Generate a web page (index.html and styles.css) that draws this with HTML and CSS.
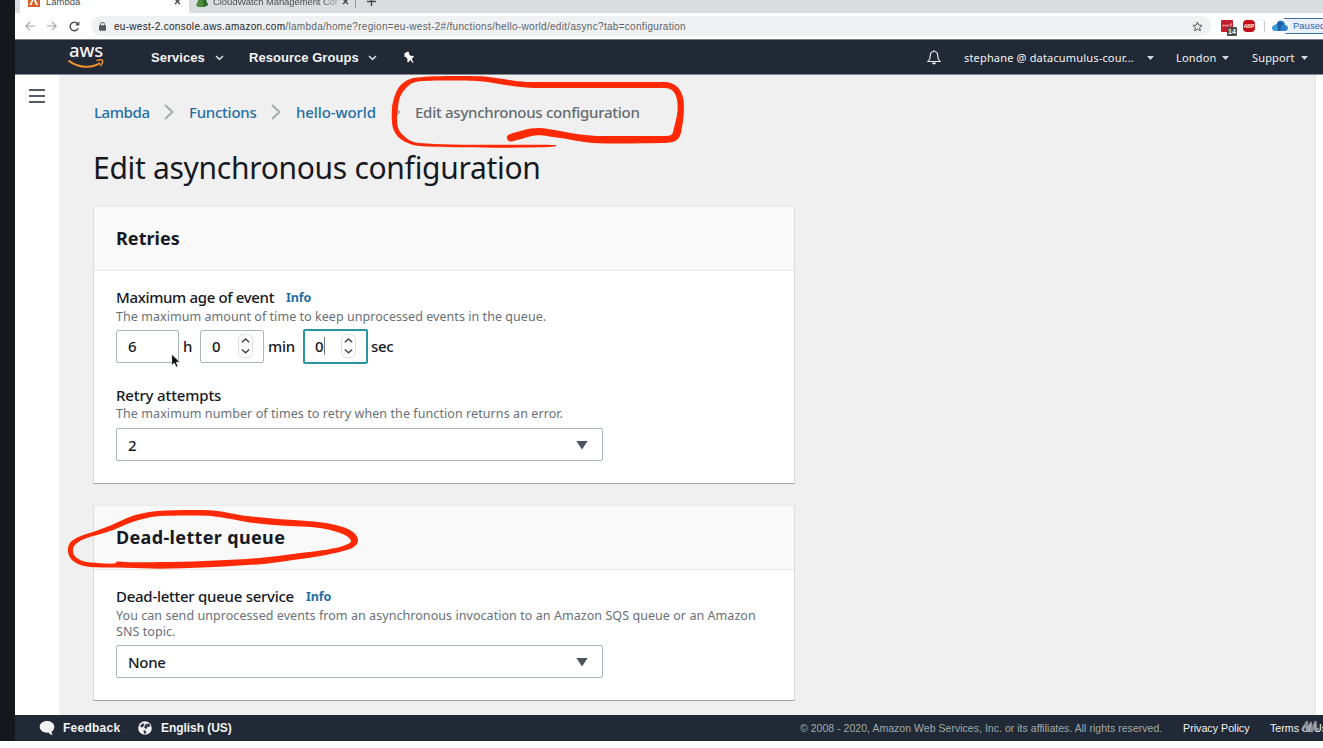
FILE: index.html
```html
<!DOCTYPE html>
<html lang="en">
<head>
<meta charset="utf-8">
<title>Lambda</title>
<link rel="stylesheet" href="styles.css">
</head>
<body>
<div class="frame">
  <div class="edge"></div>
  <div class="browser">
    <div class="tabs">
      <div class="tab tab-active">
        <svg class="favicon" width="12" height="12" viewBox="0 0 12 12"><rect width="12" height="12" fill="#d8632a"/><path d="M3 1h3l4 9H8L5.500 4.500 3.500 10H1.500L4.500 3.500 4 2.500H3z" fill="#fff"/></svg>
        <span class="tab-title tab-title-a">Lambda</span>
        <svg class="tab-x" width="7" height="7" viewBox="0 0 7 7"><path d="M1 1l5 5M6 1L1 6" stroke="#444" stroke-width="1.300"/></svg>
      </div>
      <div class="tab tab-second">
        <svg class="favicon" width="12" height="12" viewBox="0 0 12 12"><path d="M3 0h6l1 5 2 5-4 2H2l-2-2 2-4z" fill="#4b8b3b"/><path d="M6 0h3l1 5 2 5-4 2z" fill="#2f682a"/></svg>
        <span class="tab-title tab-title-b">CloudWatch Management Con:</span>
        <svg class="tab-x" width="7" height="7" viewBox="0 0 7 7"><path d="M1 1l5 5M6 1L1 6" stroke="#444" stroke-width="1.300"/></svg>
      </div>
      <div class="tab-divider"></div>
      <svg class="tab-plus" width="9" height="9" viewBox="0 0 9 9"><path d="M4.500 0v9M0 4.500h9" stroke="#444" stroke-width="1.400"/></svg>
    </div>

    <div class="toolbar">
      <svg class="nav-icon" width="10" height="10" viewBox="0 0 10 10"><path d="M10 5H1M5 .8L.8 5 5 9.200" fill="none" stroke="#a4a6a9" stroke-width="1.200"/></svg>
      <svg class="nav-icon nav-fwd" width="10" height="10" viewBox="0 0 10 10"><path d="M0 5h9M5 .8L9.200 5 5 9.200" fill="none" stroke="#a4a6a9" stroke-width="1.200"/></svg>
      <svg class="nav-icon nav-reload" width="11" height="11" viewBox="0 0 11 11"><path d="M9.300 7.200A4.300 4.300 0 1 1 8.600 2.600" fill="none" stroke="#4c4f53" stroke-width="1.500"/><path d="M10.300 .3v4.200H6.100z" fill="#4c4f53"/></svg>
      <div class="url">
        <svg width="7" height="9" viewBox="0 0 7 9"><rect y="3.300" width="7" height="5.400" rx=".7" fill="#55585c"/><path d="M1.600 4V2.200a1.900 1.900 0 0 1 3.800 0V4" fill="none" stroke="#55585c" stroke-width="1"/></svg>
        <span class="url-text"><b>eu-west-2.console.aws.amazon.com</b>/lambda/home?region=eu-west-2#/functions/hello-world/edit/async?tab=configuration</span>
        <svg class="star" width="11" height="11" viewBox="0 0 11 11"><path d="M5.500 1l1.300 3.100 3.300.3-2.500 2.200.8 3.200-2.900-1.700-2.900 1.700.8-3.200L.9 4.400l3.300-.3z" fill="none" stroke="#55585c" stroke-width="1"/></svg>
      </div>
      <div class="ext ext-red">
        <svg width="12" height="12" viewBox="0 0 12 12"><rect width="12" height="12" rx="1" fill="#c41e2b"/><path d="M1.500 5.500h7M10 3.500v3" stroke="#f1bcc0" stroke-width="1.400" stroke-dasharray="1.600 .5"/></svg>
        <span class="ext-count">14</span>
      </div>
      <div class="ext-abp">ABP</div>
      <div class="toolbar-divider"></div>
      <div class="profile">
        <svg width="19" height="19" viewBox="0 0 19 19"><circle cx="9" cy="9.500" r="9" fill="#fff"/><path d="M4 14a3 3 0 0 1 0-6 2 2 0 0 1 2-1 4 4 0 0 1 8 1 3 3 0 0 1 0 6z" fill="#3c9ddd"/><path d="M6 6a4 4 0 0 1 7 1l-3 7H7z" fill="#1d5fa4"/><path d="M10 9c2-3 7 0 6 3-1 2-2 2-3 2H9z" fill="#2e7fc4"/></svg>
        <span>Paused</span>
      </div>
    </div>

    <nav class="awsnav">
      <div class="logo">
        <span>aws</span>
        <svg width="36" height="9" viewBox="0 0 36 9"><path d="M.5 1.500C10 9 24 9.500 32 4.200" fill="none" stroke="#f0922b" stroke-width="2"/><path d="M28.500 1.600c2.600-.9 5.500-.9 6 0s-.4 3.700-2.300 5.700" fill="none" stroke="#f0922b" stroke-width="1.500"/></svg>
      </div>
      <span class="nav-bold services">Services</span>
      <svg class="chev" width="9" height="6" viewBox="0 0 9 6"><path d="M1 1l3.500 3.400L8 1" fill="none" stroke="#d5d8dc" stroke-width="1.600"/></svg>
      <span class="nav-bold groups">Resource Groups</span>
      <svg class="chev" width="9" height="6" viewBox="0 0 9 6"><path d="M1 1l3.500 3.400L8 1" fill="none" stroke="#d5d8dc" stroke-width="1.600"/></svg>
      <svg class="pin" width="12" height="13" viewBox="0 0 12 13"><path d="M1.500 2.300L5 .6l1.200 1-.5 1.100 2.200 2.400 1.900-.4 1.200 1.100-2.200 2 1.700 3.900-.8.400-2.200-3-2.400 2.400-1-1.200.6-1.800-1.900-2.700-1.300.1z" fill="#fff"/></svg>
      <div class="nav-right">
        <svg class="bell" width="14" height="15" viewBox="0 0 14 15"><path d="M7 1.500c-2.600 0-3.700 1.800-3.700 4 0 3-.8 4.500-2.300 6h12c-1.500-1.500-2.300-3-2.300-6 0-2.200-1.100-4-3.700-4zM7 .3v1.200" fill="none" stroke="#e6e8ea" stroke-width="1.200"/><path d="M5 12.500a2 2 0 0 0 4 0z" fill="#e6e8ea"/></svg>
        <span class="nav-text account">stephane @ datacumulus-cour...</span>
        <i class="caret"></i>
        <span class="nav-text region">London</span>
        <i class="caret"></i>
        <span class="nav-text support">Support</span>
        <i class="caret"></i>
      </div>
    </nav>

    <div class="page">
      <aside class="side"><div class="burger"></div></aside>
      <main class="main">
        <div class="crumbs">
          <a class="c1">Lambda</a>
          <svg class="sep" width="10" height="16" viewBox="0 0 10 16"><path d="M1 1l7.500 7L1 15" fill="none" stroke="#a3adae" stroke-width="2"/></svg>
          <a class="c2">Functions</a>
          <svg class="sep" width="10" height="16" viewBox="0 0 10 16"><path d="M1 1l7.500 7L1 15" fill="none" stroke="#a3adae" stroke-width="2"/></svg>
          <a class="c3">hello-world</a>
          <svg class="sep" width="10" height="16" viewBox="0 0 10 16"><path d="M1 1l7.500 7L1 15" fill="none" stroke="#a3adae" stroke-width="2"/></svg>
          <span class="c4">Edit asynchronous configuration</span>
        </div>
        <h1><span>Edit asynchronous configuration</span></h1>

        <section class="card card-retries">
          <h2><span class="h-retries">Retries</span></h2>
          <div class="card-body">
            <div class="label"><span class="l-age">Maximum age of event</span><a class="info">Info</a></div>
            <div class="hint"><span class="d-age">The maximum amount of time to keep unprocessed events in the queue.</span></div>
            <div class="times">
              <div class="num">6</div><span class="unit unit-h">h</span>
              <div class="num num-min">0<svg class="spin" width="15" height="24" viewBox="0 0 15 24"><rect x=".5" y=".5" width="14" height="23" rx="5" fill="none" stroke="#dedede"/><path d="M3.800 8.300L7.500 5l3.700 3.300M3.800 15.500l3.700 3.300 3.700-3.300" fill="none" stroke="#444" stroke-width="1.500"/></svg></div><span class="unit unit-min">min</span>
              <div class="num num-focus">0<i class="text-caret"></i><svg class="spin" width="15" height="24" viewBox="0 0 15 24"><rect x=".5" y=".5" width="14" height="23" rx="5" fill="none" stroke="#dedede"/><path d="M3.800 8.300L7.500 5l3.700 3.300M3.800 15.500l3.700 3.300 3.700-3.300" fill="none" stroke="#444" stroke-width="1.500"/></svg></div><span class="unit unit-sec">sec</span>
            </div>
            <div class="label label-retry"><span class="l-retry">Retry attempts</span></div>
            <div class="hint"><span class="d-retry">The maximum number of times to retry when the function returns an error.</span></div>
            <div class="select"><span>2</span><i class="arrow"></i></div>
          </div>
        </section>

        <section class="card card-dlq">
          <h2><span class="h-dlq">Dead-letter queue</span></h2>
          <div class="card-body">
            <div class="label"><span class="l-dlq">Dead-letter queue service</span><a class="info">Info</a></div>
            <div class="hint"><span class="d-dlq">You can send unprocessed events from an asynchronous invocation to an Amazon SQS queue or an Amazon<br>SNS topic.</span></div>
            <div class="select"><span>None</span><i class="arrow"></i></div>
          </div>
        </section>
      </main>
    </div>

    <footer class="footer">
      <svg width="16" height="16" viewBox="0 0 16 16"><path d="M8 1c4.200 0 7.300 2.500 7.300 5.800 0 2.200-1 3.900-2.700 5 .1 1.400.5 2.300 1.200 3.200-2 0-3.400-.9-4.300-2.400C4.500 13.100.7 10.500.7 6.800.7 3.500 3.800 1 8 1z" fill="#f3f3f3"/></svg>
      <span class="f-bold feedback">Feedback</span>
      <svg class="globe" width="14" height="14" viewBox="0 0 14 14"><circle cx="7" cy="7" r="6.800" fill="#f3f3f3"/><path d="M2 4.500l3-2.500 1.500 2L5 6l-2 .5zM7.500 3l4-.5 1 3-3 .5-1 2L6 7z M5.500 9l2 .5 1 2.500-2.500 1z" fill="#3a414e"/></svg>
      <span class="f-bold english">English (US)</span>
      <div class="footer-right">
        <span class="copy">© 2008 - 2020, Amazon Web Services, Inc. or its affiliates. All rights reserved.</span>
        <span class="privacy">Privacy Policy</span>
        <span class="terms">Terms of Use</span>
      </div>
    </footer>
  </div>

  <svg class="ink" width="1323" height="748" viewBox="0 0 1323 748">
    <path d="M556 146C554 147.800 500 148 463 147.200C440 147 425 147 413 145C400 141 393 134 392 123C391.500 114 391.500 107 393.500 100C396 91 399 86 403 83C408 79 412 78 417 77.500C430 75.800 465 75.700 480 76.300C500 77.500 512 81.500 527 82H664C676 82 682 90 683.500 100C684.500 110 683.500 120 682 127C681 134 680 138 676 140.500C673 142.500 667 143 660 143C640 143.500 610 143.800 593 143C580 142 571 139.500 560 138C551 137 545 135.300 538 135.300C530 135.500 521 139.500 512 141.500C507 142.500 505 136.500 509 134.500C518 131.500 528 128 538 128C546 128 553 130 560 131C572 133.500 585 135.500 597 136H664C670 136 672 135.500 673 132C675 123 677.500 117 677.700 107C677.500 95 674 88 664 88H533C513 87.500 497 82.500 480 81.200C466 80.300 432 80 420 81.200C413 82 410 84 407 87C401 93 399 98 398.300 105C397.500 112 396.500 117 397.200 123C398 130 400 132 403 135C408 140 412 142.500 420 143C433 144 449 144.500 463 144.700C500 145 540 144.300 556 145z"/>
    <path fill-rule="evenodd" d="M117 567.500C107 567.500 98 567.500 90 567C82 566 77 564 73 561C69 557 68 554 68 550C68 545 70 542 73 540C79 536 86 534 93 532C105 528 116 523 127 518C137 514 146 512 157 511C174 510 194 509.700 210 510.200C224 511 234 514.500 247 516C267 518.500 288 519.700 307 521C320 522 332 523.500 343 527C352 530 358 535 358 540.500C358 544 355 547 350 549C335 554 313 557.500 293 560C278 562.500 263 564.500 247 565C217 567 188 568.500 160 568.700zM117 561.500C130 562.500 145 562.500 160 562C188 562 220 560.500 247 559C263 558 278 556 293 554C312 551.500 330 550 343 546C348 544 351 543 351 541C350 537 344 534 337 532C328 529 319 527.500 307 526.700C288 526 267 525 247 522C232 519.500 219 516.300 207 515.700C192 515.300 175 515.200 160 516C148 517 137 520 127 524C118 528 109 532 97 535C89 537 82 539 77 543C73.500 546 73 548 73 550C73 554 74 556 77 558C81 561 85 562 90 562.500C98 563 107 564 115 563.500z"/>
    <g class="cursor"><path d="M171.600 354v11.500l2.700-2.300 1.800 4.100 2-.9-1.800-4 3.500-.4z"/></g>
    <path class="mark" d="M1302.500 729.500L1307 722v7M1308 731l3-8v8M1312 731l3.500-9v8l2.500-1"/>
  </svg>
</div>
</body>
</html>
```
FILE: styles.css
```css
* { box-sizing: border-box; }
body { margin: 0; background: #fff; font-family: "Noto Sans", sans-serif; color: #16191f; overflow: hidden; }
.frame { position: relative; width: 1323px; height: 748px; display: flex; overflow: hidden; }
.edge { flex: none; width: 15px; height: 741px; background: #14171b; }
.browser { width: 1308px; height: 741px; display: flex; flex-direction: column; overflow: hidden; }
span, a { white-space: nowrap; }
svg, span, a { flex: none; }
svg { display: block; }

.tabs { height: 13px; flex: none; background: #dadde0; display: flex; align-items: flex-start; overflow: hidden; font: 10px/10px "Liberation Sans", sans-serif; color: #4a4d51; }
.tab { display: flex; height: 13px; }
.tab-active { width: 169px; margin-left: 5px; background: #fff; padding-left: 8px; }
.tab-second { width: 171px; padding-left: 7px; }
.favicon { margin-top: -5px; }
.tab-title { margin-top: -3px; }
.tab-title-a { margin-left: 6px; width: 128px; font-size: 9.500px; }
.tab-title-b { margin-left: 5px; width: 125px; font-size: 9.500px; letter-spacing: -.1px; overflow: hidden; mask-image: linear-gradient(90deg, #000 88%, transparent 104%); }
.tab-x { margin-top: -2px; }
.tab-second .tab-x { margin-left: 4px; }
.tab-divider { width: 1px; height: 8px; background: #96999d; margin-left: -5px; }
.tab-plus { margin: -3px 0 0 11px; }

.toolbar { flex: none; height: 26px; background: #fff; display: flex; align-items: center; padding-left: 10px; }
.nav-fwd { margin-left: 12px; }
.nav-reload { margin-left: 12px; }
.url { flex: none; margin-left: 11px; width: 1120px; height: 20px; border-radius: 10px; background: #f0f1f3; display: flex; align-items: center; padding-left: 8px; }
.url-text { margin-left: 8px; width: 1078px; padding-top: 1px; font: 10px/12px "Liberation Sans", sans-serif; letter-spacing: .3px; color: #606367; }
.url-text b { font-weight: 400; color: #222529; }
.ext { display: flex; }
.ext-red { flex: none; position: relative; margin-left: 10px; }
.ext-count { position: absolute; left: 6px; top: 7px; width: 10px; height: 9px; background: #4c4c4c; border-radius: 1px; color: #fff; font: bold 7px/9px "Liberation Sans", sans-serif; text-align: center; }
.ext-abp { flex: none; margin-left: 10px; width: 12px; height: 12px; border-radius: 4px; background: #c20d18; color: #fff; font: bold 5px/12px "Liberation Sans", sans-serif; text-align: center; }
.toolbar-divider { flex: none; width: 1px; height: 11px; background: #c8cacd; margin-left: 9px; }
.profile { flex: none; margin-left: 9px; width: 70px; height: 16px; border: 1px solid #3d74a5; border-radius: 8px; background: #eaf1fc; display: flex; align-items: center; font: 9.500px/12px "Liberation Sans", sans-serif; color: #295fae; }
.profile svg { margin-left: -4px; }
.profile span { margin-left: 3px; }

.awsnav { flex: none; height: 36px; border-top: 1px solid #777d86; border-bottom: 1px solid #868b94; background: #222936; display: flex; align-items: center; padding-left: 53px; color: #f2f3f3; }
.logo { width: 36px; height: 24px; margin-top: -2px; display: flex; flex-direction: column; }
.logo span { font: 500 18.500px/12px "Noto Sans", sans-serif; height: 15px; text-align: center; letter-spacing: -.2px; }
.nav-bold { font: bold 13px/18px "Liberation Sans", sans-serif; padding-top: 1px; letter-spacing: .04px; }
.services { margin-left: 47px; width: 64px; }
.groups { margin-left: 25px; width: 119px; }
.chev { margin-top: 2px; }
.pin { margin-left: 26px; }
.nav-right { margin-left: auto; display: flex; align-items: center; padding-right: 15px; }
.bell { margin-top: 1px; }
.nav-text { font-size: 11px; line-height: 18px; padding-top: 2px; letter-spacing: .17px; }
.account { margin-left: 23px; width: 183px; }
.region { margin-left: 22px; width: 46px; }
.support { margin-left: 23px; width: 49px; }
.caret { width: 7px; height: 4px; margin-top: 2px; background: #d5d8dc; clip-path: polygon(0 0, 100% 0, 50% 100%); }

.page { flex: 1; display: flex; min-height: 0; }
.side { flex: none; width: 44px; background: #fff; padding: 14px 0 0 14px; }
.burger { width: 16px; height: 14px; border-top: 2px solid #545b64; border-bottom: 2px solid #545b64; display: flex; align-items: center; }
.burger::after { content: ""; width: 16px; height: 2px; background: #545b64; }
.main { width: 1257px; background: #f0f0f0; border-right: 1px solid #e4e4e4; padding-left: 34px; }
.crumbs { display: flex; align-items: center; height: 22px; margin: 26px 0 0 1px; font-size: 15px; line-height: 22px; font-weight: 500; color: #646b70; }
.crumbs a, .info { color: #1f6fa5; }
.c1 { width: 70px; letter-spacing: -.4px; }
.c2 { width: 82px; margin-left: 15px; letter-spacing: -.25px; }
.c3 { width: 95px; margin-left: 15px; letter-spacing: -.1px; }
.c4 { margin-left: 14px; letter-spacing: -.26px; }
h1 { margin: 22px 0 0; height: 46px; font-size: 30px; line-height: 46px; font-weight: 400; letter-spacing: -.3px; }

.card { width: 702px; background: #fff; border: 1px solid #d9dcdc; border-top-color: #eaeaea; border-bottom: 1px solid #9fa5aa; }
.card-retries { margin-top: 15px; height: 278px; }
.card-dlq { margin-top: 21px; height: 196px; }
h2 { margin: 0; height: 64px; padding-left: 22px; background: #f9f9f9; border-bottom: 1px solid #e6e8e8; font-size: 18px; line-height: 63px; font-weight: 700; }
.h-retries { letter-spacing: .05px; }
.h-dlq { letter-spacing: .35px; }
.card-body { padding: 17px 0 0 22px; }
.label { display: flex; align-items: center; height: 20px; margin-top: -1px; font-size: 15px; line-height: 20px; font-weight: 500; letter-spacing: -.35px; }
.l-dlq { letter-spacing: -.27px; }
.l-retry { letter-spacing: -.15px; }
.info { margin-left: 12px; padding-top: 2px; font-size: 12.500px; font-weight: 700; letter-spacing: -.1px; }
.hint { font-size: 12.500px; line-height: 16px; padding-top: 2px; color: #687078; }
.d-age { letter-spacing: .05px; }
.d-retry { letter-spacing: .08px; }
.d-dlq { letter-spacing: .06px; }
.times { display: flex; align-items: center; height: 34px; margin-top: 4px; font-size: 15px; font-weight: 500; }
.num { flex: none; width: 63px; height: 33px; border: 1px solid #aab7b8; border-radius: 2px; background: #fff; padding-left: 11px; display: flex; align-items: center; line-height: 20px; }
.num-min { width: 64px; margin-left: 8px; }
.num-focus { width: 65px; height: 35px; margin-left: 8px; border: 2px solid #2b93a2; padding-left: 10px; }
.spin { margin-left: auto; margin-right: 10px; }
.unit { letter-spacing: -.3px; }
.text-caret { width: 1px; height: 18px; background: #777; }
.unit-h { margin-left: 4px; width: 9px; }
.unit-min { margin-left: 4px; width: 27px; }
.unit-sec { margin-left: 3px; }
.times + .label-retry { margin-top: 22px; }
.label-retry + .hint { padding-top: 1px; }
.select { width: 487px; height: 33px; margin: 5px 0 0; border: 1px solid #aab7b8; border-radius: 2px; background: #fff; display: flex; align-items: center; justify-content: space-between; padding: 0 14px 0 11px; font-size: 15px; line-height: 20px; font-weight: 500; letter-spacing: -.3px; }
.label-retry ~ .select { margin-top: 6px; }
.arrow { width: 12px; height: 9px; margin-top: 1px; background: #4c5560; clip-path: polygon(0 0, 100% 0, 50% 100%); }

.footer { flex: none; height: 26px; background: #222936; display: flex; align-items: center; padding-left: 24px; color: #f2f3f3; font: 10.700px/16px "Liberation Sans", sans-serif; }
.f-bold { font-weight: 700; font-size: 12px; }
.feedback { margin-left: 8px; width: 59px; letter-spacing: .25px; }
.globe { margin-left: 16px; }
.english { margin-left: 9px; letter-spacing: -.05px; }
.footer-right { margin-left: auto; display: flex; width: 523px; flex: none; }
.copy { width: 383px; color: #a0abad; font-size: 10.500px; letter-spacing: .03px; }
.privacy { width: 87px; }

.ink { position: absolute; left: 0; top: 0; pointer-events: none; }
.ink path { fill: #ff2a05; }
.ink .cursor path { fill: #111; stroke: #fff; stroke-width: .8; }
.ink .mark { fill: none; stroke: #a4a8ae; stroke-width: 2.500; stroke-linecap: round; stroke-linejoin: round; opacity: .8; }
```
